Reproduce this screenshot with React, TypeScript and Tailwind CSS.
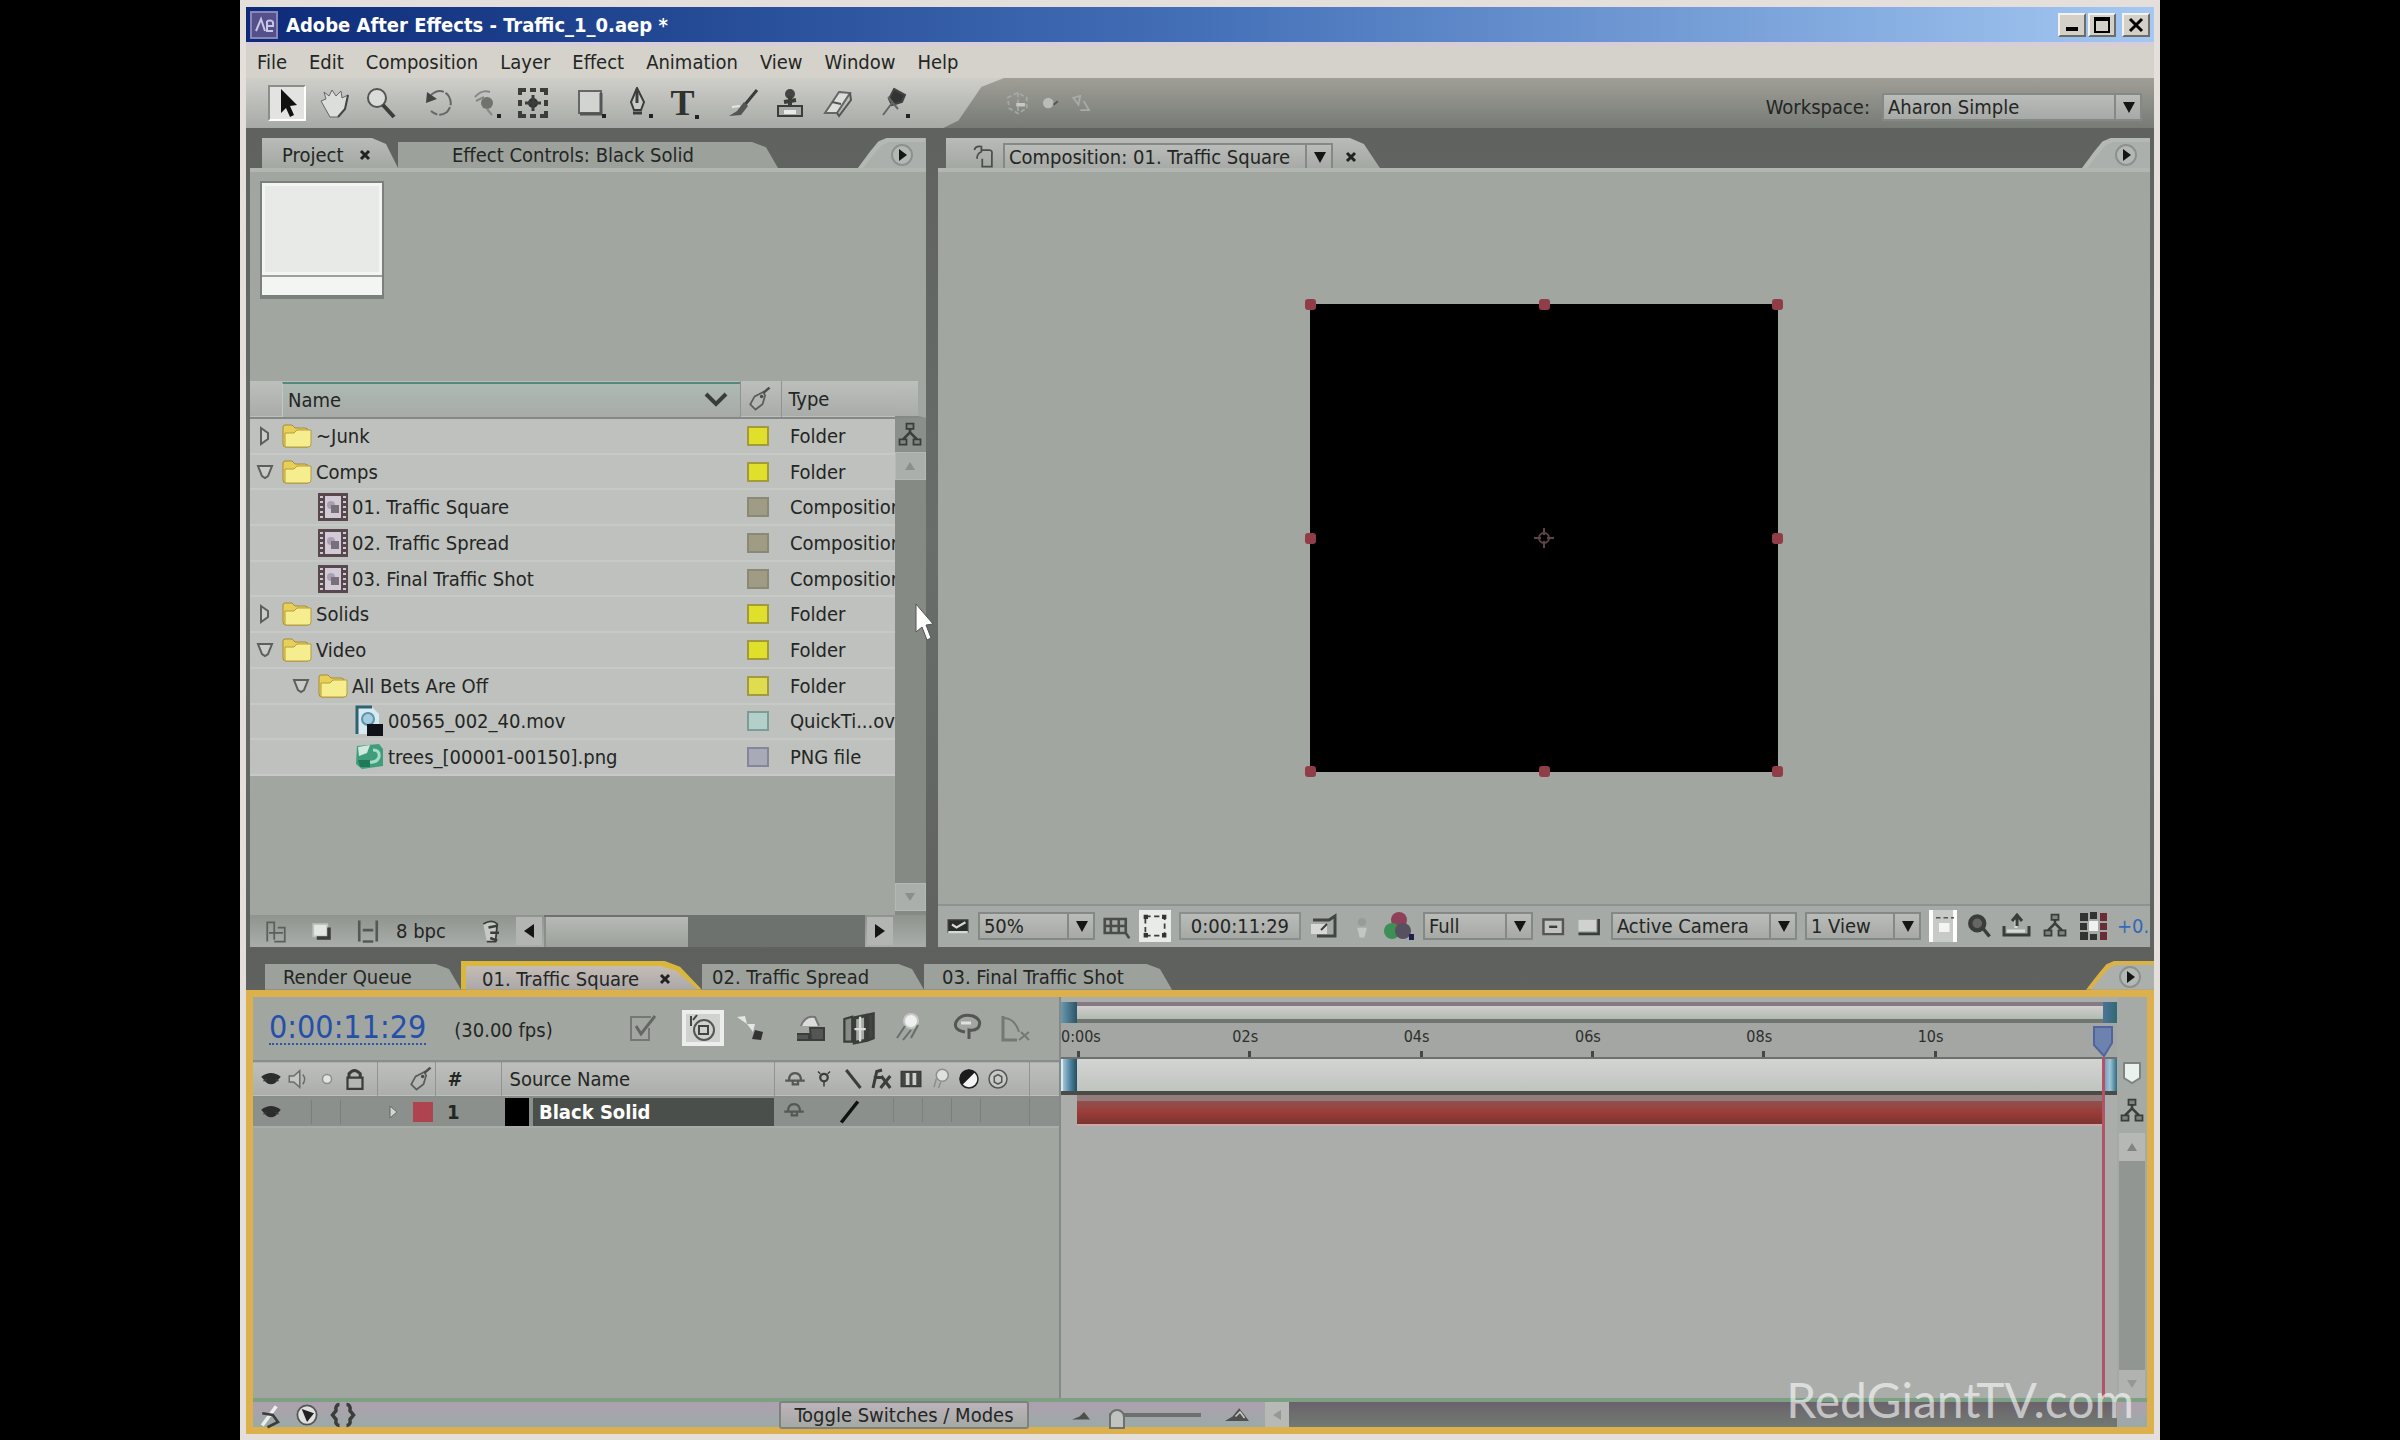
import React, {ReactNode} from 'react'
import clsx from 'clsx'

const menus = ['File', 'Edit', 'Composition', 'Layer', 'Effect', 'Animation', 'View', 'Window', 'Help']

type Item = {
    name: string
    kind: 'folder' | 'comp' | 'movie' | 'image'
    level: number
    open?: boolean
    type: string
    label: string
}

const items: Item[] = [
    {name: '~Junk', kind: 'folder', level: 0, open: false, type: 'Folder', label: 'bg-[#dfdf2c] border-[#a39a3c]'},
    {name: 'Comps', kind: 'folder', level: 0, open: true, type: 'Folder', label: 'bg-[#dfdf2c] border-[#a39a3c]'},
    {name: '01. Traffic Square', kind: 'comp', level: 1, type: 'Composition', label: 'bg-[#a09c84] border-[#8a8877]'},
    {name: '02. Traffic Spread', kind: 'comp', level: 1, type: 'Composition', label: 'bg-[#a09c84] border-[#8a8877]'},
    {name: '03. Final Traffic Shot', kind: 'comp', level: 1, type: 'Composition', label: 'bg-[#a09c84] border-[#8a8877]'},
    {name: 'Solids', kind: 'folder', level: 0, open: false, type: 'Folder', label: 'bg-[#dfdf2c] border-[#a39a3c]'},
    {name: 'Video', kind: 'folder', level: 0, open: true, type: 'Folder', label: 'bg-[#dfdf2c] border-[#a39a3c]'},
    {name: 'All Bets Are Off', kind: 'folder', level: 1, open: true, type: 'Folder', label: 'bg-[#e0dc50] border-[#a39a3c]'},
    {name: '00565_002_40.mov', kind: 'movie', level: 2, type: 'QuickTi...ov', label: 'bg-[#b2cfc9] border-[#7d9c98]'},
    {name: 'trees_[00001-00150].png', kind: 'image', level: 2, type: 'PNG file', label: 'bg-[#a9aab8] border-[#85869a]'},
]

const indents = ['pl-[5px]', 'pl-[41px]', 'pl-[77px]']

type SvgProps = { className?: string, children: ReactNode, box?: string }

const Svg = ({className = 'size-8', children, box = '0 0 32 32'}: SvgProps) => (
    <svg viewBox={box} className={clsx('shrink-0', className)} fill="none" stroke="#3a3d3a" strokeWidth="2">
        {children}
    </svg>
)

const Eye = () => (
    <Svg className="size-6">
        <path d="M3 13 Q16 3 29 13 L22 21 Q16 25 10 21 Z" fill="#2c2c2e" stroke="none"/>
        <path d="M6 19 L10 16 M26 19 L22 16" />
    </Svg>
)

const Tag = () => (
    <Svg className="size-7">
        <path d="M21 8 L11 13 L6 22 L12 28 L20 22 L23 12 Z" fill="#b4b8b3" stroke="#5a5d5a"/>
        <path d="M21 9 L28 3" stroke="#4a4d4a" strokeWidth="3"/>
        <circle cx="19" cy="13" r="2" fill="#4a4d4a" stroke="none"/>
    </Svg>
)

const Shy = () => (
    <Svg className="size-6">
        <path d="M3 18 H29 M8 18 Q8 8 16 8 Q24 8 24 18 M13 19 V23 H20 V19" stroke="#555855" strokeWidth="3"/>
    </Svg>
)

const Twirl = ({open}: { open?: boolean }) => (
    <Svg className="size-5" box="0 0 20 20">
        {open
            ? <path d="M3 4 H17 L13 14 L10 16 L7 14 Z" fill="#c9ccc8" stroke="#5c605c"/>
            : <path d="M6 2 L13 7 V13 L6 18 Z" fill="#c9ccc8" stroke="#5c605c"/>}
    </Svg>
)

const Close = () => (
    <Svg className="size-3" box="0 0 12 12">
        <path d="M2 2 L10 10 M10 2 L2 10" stroke="#222" strokeWidth="3"/>
    </Svg>
)

const Sprout = ({className = 'size-7'}: { className?: string }) => (
    <Svg className={className}>
        <path d="M16 4 V14 M16 13 L8 21 M16 13 L24 21" strokeWidth="3"/>
        <path d="M4 21 h8 v6 h-8 z M20 21 h8 v6 h-8 z M12 3 h8 v6 h-8z" fill="#80857f"/>
    </Svg>
)

const ItemIcon = ({kind}: { kind: Item['kind'] }) => {
    if (kind === 'folder')
        return (
            <Svg className="size-8">
                <path d="M2 7 Q2 5 4 5 H11 L14 8 H24 Q27 8 27 11 V27 H5 Q2 27 2 24 Z" fill="#e8cf58" stroke="#a58c35" strokeWidth="1"/>
                <path d="M4 13 H13 L16 10 H30 V24 Q30 27 27 27 H4 Z" fill="#f6ee8e" stroke="#b59c3a" strokeWidth="1"/>
            </Svg>
        )
    if (kind === 'comp')
        return (
            <Svg className="size-8">
                <rect x="1" y="2" width="30" height="28" fill="#57474f" stroke="none"/>
                <rect x="8" y="5" width="16" height="22" fill="#d2cbd6" stroke="none"/>
                <path d="M3 6h3M3 11h3M3 16h3M3 21h3M3 26h3M26 6h3M26 11h3M26 16h3M26 21h3M26 26h3" stroke="#cfc8cf"/>
                <circle cx="14" cy="14" r="4" fill="#a8a0b0" stroke="none"/>
                <path d="M14 14h8v8h-8z" fill="#75707c" stroke="none"/>
            </Svg>
        )
    if (kind === 'movie')
        return (
            <Svg className="size-8">
                <path d="M4 2 H19 L26 9 V29 H4 Z" fill="#d9e9f0" stroke="none"/>
                <path d="M4 29 V2 H19" stroke="#2e6272" strokeWidth="3"/>
                <circle cx="15" cy="14" r="6" fill="#a4ccdc" stroke="#5a94ac"/>
                <path d="M14 19 H30 V31 H14 Z" fill="#101418" stroke="none"/>
            </Svg>
        )
    return (
        <Svg className="size-8">
            <path d="M4 5 L26 3 L30 8 V25 L9 28 L3 23 Z" fill="#3f9d7d" stroke="none"/>
            <path d="M5 6 L17 4 L14 12 L6 15 Z" fill="#cfeadd" stroke="none"/>
            <path d="M20 9 Q27 9 26 16 Q24 22 16 21" stroke="#a8dcc6" strokeWidth="3"/>
            <path d="M5 19 H17 V26 H7 Z" fill="#1f7a5c" stroke="none"/>
        </Svg>
    )
}

type DropProps = { label: string, value: string, className?: string }

const Drop = ({label, value, className}: DropProps) => (
    <div className={clsx('relative h-7 shrink-0', className)}>
        <select aria-label={label}
                className="block size-full appearance-none border-2 border-[#858985] bg-linear-to-b from-[#b9bcb8] to-[#a6a9a5] pl-1 pr-8 leading-6">
            <option>{value}</option>
        </select>
        <div className="pointer-events-none absolute inset-y-0 right-0 flex w-7 items-center justify-center border-l-2 border-[#858985]">
            <Svg className="size-3" box="0 0 12 12"><path d="M0 1 H12 L6 12 Z" fill="#151515" stroke="none"/></Svg>
        </div>
    </div>
)

const Flyout = ({gold = false}: { gold?: boolean }) => (
    <div className={clsx('ml-auto flex h-full w-[68px] pl-[5px] pt-[4px] [clip-path:polygon(0_100%,18%_45%,30%_12%,42%_0,100%_0,100%_100%)]',
        gold ? 'bg-[#d9b24a]' : 'bg-[#b5b9b4]')}>
        <button aria-label="Panel menu" className="flex flex-1 items-center justify-end bg-[#acb0ac] pr-3 [clip-path:polygon(0_100%,18%_45%,30%_12%,42%_0,100%_0,100%_100%)]">
            <Svg className="size-6" box="0 0 24 24">
                <circle cx="12" cy="12" r="10" fill="#b4b8b4" stroke="#8d918d"/>
                <path d="M9 6 L17 12 L9 18 Z" fill="#151515" stroke="none"/>
            </Svg>
        </button>
    </div>
)

type TabProps = { children: ReactNode, className?: string, onTop?: boolean }

const Tab = ({children, className, onTop}: TabProps) => (
    <button role="tab" aria-selected={!!onTop}
            className={clsx('flex shrink-0 items-center whitespace-nowrap [clip-path:polygon(0_0,calc(100%-26px)_0,calc(100%-12px)_20%,100%_100%,0_100%)]',
                onTop ? 'h-full bg-linear-to-b from-[#b8bbb7] to-[#a4a8a3] pt-1' : 'h-[26px] self-end bg-[#9da19c]', className)}>
        {children}
    </button>
)

const TitleBar = () => (
    <header className="flex h-[35px] items-center gap-2 bg-linear-to-r from-[#0d2a78] via-[#4470b8] to-[#a4c8f2] px-1">
        <Svg className="size-7" box="0 0 28 28">
            <rect x="1" y="1" width="26" height="26" fill="#54508c" stroke="#8a86b8"/>
            <path d="M6 20 L11 8 L15 20 M17 15 H24 M17 10 Q24 8 23 14 M17 10 V20 H23" stroke="#c8c8e4"/>
        </Svg>
        <h1 className="font-bold text-white">Adobe After Effects - Traffic_1_0.aep *</h1>
        <div className="ml-auto flex items-center gap-[2px]">
            <button aria-label="Minimize" className="flex h-6 w-7 items-end justify-center border-2 border-[#f4f2ec] border-r-[#6c6c68] border-b-[#6c6c68] bg-[#d4d0c8] pb-1">
                <span className="h-1 w-3 bg-black"/>
            </button>
            <button aria-label="Maximize" className="flex h-6 w-7 items-center justify-center border-2 border-[#f4f2ec] border-r-[#6c6c68] border-b-[#6c6c68] bg-[#d4d0c8]">
                <span className="size-4 border-2 border-t-4 border-black"/>
            </button>
            <button aria-label="Close" className="ml-1 flex h-6 w-7 items-center justify-center border-2 border-[#f4f2ec] border-r-[#6c6c68] border-b-[#6c6c68] bg-[#d4d0c8]">
                <Svg className="size-4" box="0 0 16 16"><path d="M2 2 L14 14 M14 2 L2 14" stroke="#000" strokeWidth="3"/></Svg>
            </button>
        </div>
    </header>
)

const Corner = () => <path d="M27 27 h4 v4 h-4 z" fill="#222" stroke="none"/>

const tools: { name: string, icon: ReactNode }[][] = [
    [
        {name: 'Selection', icon: <Svg><path d="M10 2 V26 L15 21 L19 30 L23 28 L19 19 L26 18 Z" fill="#111" stroke="none"/></Svg>},
        {
            name: 'Hand', icon: <Svg>
                <path d="M3 14 L8 12 L6 5 L11 9 L14 3 L18 9 L23 4 L24 11 L30 8 L27 22 L20 30 H12 Z" fill="#dcdedb" stroke="#666" strokeWidth="1"/>
                <path d="M30 8 L27 22 L20 30" stroke="#444"/>
            </Svg>
        },
        {
            name: 'Zoom', icon: <Svg>
                <circle cx="12" cy="11" r="9" fill="#dadcd9" stroke="#555"/>
                <path d="M18 18 L29 30" strokeWidth="4"/>
            </Svg>
        },
    ],
    [
        {
            name: 'Rotation', icon: <Svg>
                <path d="M8 8 Q17 0 25 8 Q31 17 24 25 Q16 31 8 24" stroke="#666" strokeDasharray="14 2"/>
                <path d="M3 16 L4 5 L14 12 Z" fill="#444" stroke="none"/>
            </Svg>
        },
        {
            name: 'Orbit Camera', icon: <Svg>
                <circle cx="17" cy="16" r="6" fill="#70746f" stroke="none"/>
                <path d="M5 10 Q12 2 20 5 M6 14 L14 10 M17 22 L22 28" stroke="#888"/><Corner/>
            </Svg>
        },
        {
            name: 'Pan Behind', icon: <Svg>
                <path d="M3 8 V3 H9 M13 3 H19 M23 3 H29 V8 M3 13 V19 M29 13 V19 M3 24 V29 H9 M13 29 H19 M23 29 H29 V24" strokeWidth="4"/>
                <circle cx="16" cy="16" r="5" fill="#333" stroke="none"/>
                <path d="M16 8 V24 M8 16 H24" strokeWidth="3"/>
            </Svg>
        },
    ],
    [
        {
            name: 'Rectangle', icon: <Svg>
                <rect x="4" y="4" width="22" height="22" fill="#d2d4d1" stroke="#666"/>
                <path d="M26 6 V27 H5" stroke="#555" strokeWidth="3"/><Corner/>
            </Svg>
        },
        {
            name: 'Pen', icon: <Svg>
                <path d="M15 1 L9 15 L12 23 H19 L22 15 Z" fill="#c9cbc8"/>
                <path d="M15 4 V16 M11 26 H20" strokeWidth="3"/><Corner/>
            </Svg>
        },
        {
            name: 'Type', icon: <span className="flex items-end">
                <span className="font-['Liberation_Serif',serif] text-[36px] leading-8 font-bold text-[#2f322f]">T</span>
                <Svg className="size-1" box="0 0 4 4"><path d="M0 0 h4 v4 h-4 z" fill="#222" stroke="none"/></Svg>
            </span>
        },
    ],
    [
        {
            name: 'Brush', icon: <Svg>
                <path d="M30 3 L16 20" strokeWidth="3"/>
                <path d="M17 15 L21 19 L14 28 L2 29 L10 24 Z" fill="#555" stroke="none"/>
                <path d="M5 20 L13 19" stroke="#e4e6e3"/>
            </Svg>
        },
        {
            name: 'Clone Stamp', icon: <Svg>
                <circle cx="16" cy="7" r="5" fill="#444" stroke="none"/>
                <path d="M16 9 V18 M10 15 L22 13" strokeWidth="4"/>
                <path d="M4 19 H28 V29 H4 Z" fill="#aaa"/>
                <path d="M10 25 H22" stroke="#e8eae7" strokeWidth="4"/>
            </Svg>
        },
        {
            name: 'Eraser', icon: <Svg>
                <path d="M18 5 L29 6 L16 26 L4 26 Z" fill="#dcdedb" stroke="#666"/>
                <path d="M29 6 L30 13 L18 29 L16 26 M11 15 L20 17" stroke="#555"/>
            </Svg>
        },
    ],
    [
        {
            name: 'Puppet Pin', icon: <Svg>
                <path d="M15 2 L26 8 L23 15 L13 18 L10 12 Z" fill="#333" stroke="#444"/>
                <path d="M9 10 L19 22 M13 16 L4 28" stroke="#666"/><Corner/>
            </Svg>
        },
    ],
]

const Toolbar = () => (
    <div className="flex h-[50px] items-center bg-linear-to-b from-[#a09f97] to-[#777b76]">
        <div className="flex h-full w-[758px] shrink-0 items-center gap-[11px] bg-linear-to-b from-[#cfcfca] to-[#a7aaa6] pl-[17px] [clip-path:polygon(0_0,100%_0,97%_18%,94%_85%,92%_100%,0_100%)]">
            {tools.map((group, i) => (
                <div key={i} className="flex">
                    {group.map(tool => (
                        <div key={tool.name} className="flex w-[47px] justify-center">
                            <button aria-label={tool.name}
                                    className={clsx('flex h-9 w-[38px] items-center justify-center',
                                        tool.name === 'Selection' && 'border-2 border-[#8b8e8a] border-r-white border-b-white bg-[#e3e4e1]')}>
                                {tool.icon}
                            </button>
                        </div>
                    ))}
                </div>
            ))}
        </div>
        <div className="flex items-center gap-1">
            <Svg className="size-7" box="0 0 32 32">
                <path d="M4 10 L16 4 L26 10 V22 L16 28 L6 22 Z M16 4 V28" stroke="#a5a8a3" strokeDasharray="5 3"/>
                <path d="M14 18 H24" stroke="#c5c8c3" strokeWidth="4"/>
            </Svg>
            <Svg className="size-7"><circle cx="14" cy="16" r="6" fill="#b9bcb7" stroke="none"/><path d="M20 18 L25 14" stroke="#555"/></Svg>
            <Svg className="size-7"><path d="M6 10 L14 8 L12 18 Z M18 14 L24 24 L14 24" stroke="#a9aca7"/></Svg>
        </div>
        <div className="ml-auto flex items-center gap-3 pt-2 pr-3">
            <span>Workspace:</span>
            <Drop label="Workspace" value="Aharon Simple" className="w-[260px]"/>
        </div>
    </div>
)

const ProjectPanel = () => (
    <section className="flex min-h-0 min-w-0 flex-col">
        <div role="tablist" className="flex h-[30px] shrink-0 pl-3">
            <Tab onTop className="w-[136px] gap-4 pl-5">Project <Close/></Tab>
            <Tab className="w-[380px] pl-[54px]">Effect Controls: Black Solid</Tab>
            <Flyout/>
        </div>
        <div className="flex min-h-0 flex-1 flex-col border-t-4 border-[#b2b6b1] bg-[#a1a6a1]">
            <div className="flex h-[209px] shrink-0 items-start pt-[9px] pl-[10px]">
                <div className="flex w-[124px] flex-col border-2 border-b-4 border-[#7c807c] bg-[#f3f5f3]">
                    <div className="m-[3px] h-[86px] bg-[#e8eae8]"/>
                    <div className="h-5 border-t-2 border-[#9da19c]"/>
                </div>
            </div>
            <div className="flex min-h-0 flex-1">
                <div className="min-w-0 flex-1">
                    <table className="h-[395px] w-full table-fixed border-collapse">
                        <colgroup>
                            <col/>
                            <col className="w-[41px]"/>
                            <col className="w-[113px]"/>
                        </colgroup>
                        <thead className="text-left">
                        <tr className="h-[37px] border-b-2 border-[#858985] bg-linear-to-b from-[#bcbfbb] to-[#a9aca8]">
                            <th className="p-0 font-normal">
                                <div className="ml-8 flex h-[35px] items-center justify-between border-t-2 border-l border-t-[#55877a] border-l-[#c5c8c4] bg-linear-to-b from-[#adbab4] to-[#a8aaa7] pr-3 pl-[5px]">
                                    Name
                                    <Svg className="h-4 w-6" box="0 0 24 16"><path d="M2 2 L12 12 L22 2" strokeWidth="4"/></Svg>
                                </div>
                            </th>
                            <th className="border-x border-[#90938f] p-0 pl-1 font-normal" aria-label="Label"><Tag/></th>
                            <th className="p-0 pl-[6px] font-normal">Type</th>
                        </tr>
                        </thead>
                        <tbody>
                        {items.map(item => (
                            <tr key={item.name} className="border-b-2 border-[#c6c9c5] bg-[#bec1bd]">
                                <td className="p-0">
                                    <div className={clsx('flex items-center whitespace-nowrap', indents[item.level])}>
                                        <span className="flex w-[26px]">{item.kind === 'folder' && <Twirl open={item.open}/>}</span>
                                        <ItemIcon kind={item.kind}/>
                                        <span className="pl-[3px]">{item.name}</span>
                                    </div>
                                </td>
                                <td className="p-0 pl-[6px]"><div className={clsx('h-5 w-[22px] border-2', item.label)}/></td>
                                <td className="overflow-hidden p-0 pl-2 whitespace-nowrap">{item.type}</td>
                            </tr>
                        ))}
                        </tbody>
                    </table>
                </div>
                <div className="flex w-[31px] shrink-0 flex-col bg-[#858a85]">
                    <div className="h-[37px] border-r-8 border-b-2 border-b-[#858985] border-r-[#a1a6a1] bg-linear-to-b from-[#bcbfbb] to-[#a9aca8]"/>
                    <button aria-label="Project flowchart" className="flex h-[34px] items-center justify-center bg-[#8b8f8b]"><Sprout/></button>
                    <button aria-label="Scroll up" className="flex h-7 items-center justify-center border border-[#b5b8b4] bg-[#abafab]">
                        <Svg className="size-3" box="0 0 12 12"><path d="M6 2 L11 10 H1 Z" fill="#8b8f8b" stroke="none"/></Svg>
                    </button>
                    <button aria-label="Scroll down" className="mt-auto mb-1 flex h-7 items-center justify-center border border-[#b5b8b4] bg-[#abafab]">
                        <Svg className="size-3" box="0 0 12 12"><path d="M6 10 L11 2 H1 Z" fill="#8b8f8b" stroke="none"/></Svg>
                    </button>
                </div>
            </div>
            <div className="flex h-8 shrink-0 items-center bg-linear-to-b from-[#90948f] to-[#aaaeaa] pl-3">
                <button aria-label="Find" className="flex w-[46px]">
                    <Svg className="size-7"><path d="M6 28 V6 H14 V26 M18 12 H26 V28 H14 M8 18 H24" stroke="#5c5f5c"/></Svg>
                </button>
                <button aria-label="New folder" className="flex w-[46px]">
                    <Svg className="size-7"><path d="M6 8 H22 V22 H6 Z" fill="#e4e6e3" stroke="#c0c3bf"/><path d="M24 12 V24 H10" strokeWidth="4"/></Svg>
                </button>
                <button aria-label="New composition" className="flex w-[42px]">
                    <Svg className="size-7"><path d="M6 4 V28 M26 4 V28 M10 15 H22 M10 28 H22" stroke="#555855" strokeWidth="3"/></Svg>
                </button>
                <button>8 bpc</button>
                <button aria-label="Delete" className="ml-8 flex w-[38px]">
                    <Svg className="size-7"><path d="M6 8 Q16 2 22 8 L20 28 H10" fill="#c6c9c5"/><path d="M12 12 L22 10 M14 18 H24 M14 24 L22 27" strokeWidth="3"/></Svg>
                </button>
                <button aria-label="Scroll left" className="flex h-7 w-[26px] items-center justify-center bg-[#b2b5b1]">
                    <Svg className="size-4" box="0 0 16 16"><path d="M13 1 V15 L3 8 Z" fill="#151515" stroke="none"/></Svg>
                </button>
                <div className="mx-[2px] flex h-full flex-1 bg-[#6e726e] pt-[2px]">
                    <div className="w-[45%] border-l-2 border-[#8b8f8b] bg-linear-to-b from-[#b6b9b5] to-[#9da19c]"/>
                </div>
                <button aria-label="Scroll right" className="mr-[33px] flex h-7 w-[26px] items-center justify-center bg-[#b2b5b1]">
                    <Svg className="size-4" box="0 0 16 16"><path d="M3 1 V15 L13 8 Z" fill="#151515" stroke="none"/></Svg>
                </button>
            </div>
        </div>
    </section>
)

const handles = [
    '-top-[5px] -left-[5px]', '-top-[5px] left-1/2 -ml-[5px]', '-top-[5px] -right-[5px]',
    'top-1/2 -mt-[5px] -left-[5px]', 'top-1/2 -mt-[5px] -right-[5px]',
    '-bottom-[5px] -left-[5px]', '-bottom-[5px] left-1/2 -ml-[5px]', '-bottom-[5px] -right-[5px]',
]

const CompFooter = () => (
    <div className="flex h-[43px] shrink-0 items-center gap-2 overflow-hidden border-t-2 border-[#8f938f] bg-[#a6aaa6] pl-2 whitespace-nowrap">
        <Svg className="size-6"><path d="M3 8 H29 V24 H3 Z" fill="#2a2c2a"/><path d="M3 24 H29 M8 14 L14 18 L26 11" stroke="#d5d8d4" strokeWidth="3"/></Svg>
        <Drop label="Magnification" value="50%" className="w-[117px]"/>
        <Svg className="size-7"><path d="M2 8 H26 V24 H2 Z M9 8 V24 M18 8 V24 M2 16 H26 M26 24 L30 30" stroke="#4a4d4a" strokeWidth="3"/></Svg>
        <button aria-label="Toggle mask visibility" className="flex size-8 shrink-0 items-center justify-center bg-[#e9ebe9]">
            <Svg className="size-7"><rect x="5" y="5" width="22" height="22" strokeDasharray="6 4"/><path d="M3 3h5v5h-5z M24 3h5v5h-5z M3 24h5v5h-5z M24 24h5v5h-5z" fill="#333" stroke="none"/></Svg>
        </button>
        <button className="h-7 w-[122px] shrink-0 border-2 border-[#8b8f8b] bg-linear-to-b from-[#b9bcb8] to-[#a6a9a5] leading-6">0:00:11:29</button>
        <Svg><path d="M4 10 L20 10 L26 6 V26 H8" stroke="#444" strokeWidth="3"/><path d="M2 14 H18 V24 H2 Z" fill="#d6d9d5" stroke="none"/><path d="M12 20 L18 14"/></Svg>
        <Svg className="size-[26px]"><circle cx="16" cy="11" r="5" fill="#989c98" stroke="none"/><path d="M10 18 H22 L19 30 H13 Z" fill="#c3c6c2" stroke="none"/></Svg>
        <Svg>
            <circle cx="16" cy="10" r="8" fill="#8e4058" stroke="none"/>
            <circle cx="9" cy="21" r="8" fill="#3d8f55" stroke="none"/>
            <circle cx="20" cy="21" r="8" fill="#57505e" stroke="none"/>
            <path d="M26 24h5v6h-5z" fill="#1d2048" stroke="none"/>
        </Svg>
        <Drop label="Resolution" value="Full" className="w-[110px]"/>
        <Svg className="size-[26px]"><path d="M3 8 H27 V26 H3 Z" fill="#c0c3bf" stroke="#555" strokeWidth="3"/><path d="M10 17 H20" strokeWidth="3"/></Svg>
        <Svg className="size-7"><path d="M4 9 H24 V22 H4 Z" fill="#cfd2ce" stroke="none"/><path d="M27 8 V25 H4" strokeWidth="3"/></Svg>
        <Drop label="3D view" value="Active Camera" className="w-[186px]"/>
        <Drop label="View layout" value="1 View" className="w-[116px]"/>
        <button aria-label="Pixel aspect" className="flex h-8 w-7 shrink-0 items-center border-x-4 border-white bg-[#c7cac6]">
            <Svg className="size-6"><path d="M4 5 H28" strokeDasharray="6 4" stroke="#555"/><rect x="8" y="12" width="14" height="12" fill="#f3f4f3" stroke="none"/></Svg>
        </button>
        <Svg className="size-7"><circle cx="14" cy="13" r="8" fill="#666" strokeWidth="5"/><path d="M20 18 L28 28" strokeWidth="4"/></Svg>
        <Svg><path d="M3 16 V25 H28 V16" strokeWidth="3"/><path d="M6 21 H24 M15 10 V18" stroke="#d8dbd7" strokeWidth="3"/><path d="M16 4 V16 M11 11 L16 5 L21 11" strokeWidth="3"/></Svg>
        <Sprout/>
        <Svg>
            <path d="M3 3h8v8h-8z M3 13h7v7h-7z M3 22h8v8h-8z M13 24h7v6h-7z M13 2h7v7h-7z" fill="#333" stroke="none"/>
            <path d="M23 3h7v8h-7z M23 13h7v7h-7z M23 22h7v8h-7z" fill="#6b2d35" stroke="none"/>
            <path d="M12 11h9v10h-9z" fill="#f0f1f0" stroke="none"/>
        </Svg>
        <button className="text-[#3468b8]">+0.</button>
    </div>
)

const CompPanel = () => (
    <section className="flex min-h-0 min-w-0 flex-col">
        <div className="flex h-[30px] shrink-0 pl-2">
            <div className="flex h-full w-[434px] shrink-0 items-center bg-linear-to-b from-[#b8bbb7] to-[#a4a8a3] pt-2 pl-6 [clip-path:polygon(0_0,calc(100%-30px)_0,calc(100%-16px)_20%,100%_100%,0_100%)]">
                <Svg className="mr-[5px] size-7"><path d="M5 8 Q6 3 13 4 V10 Q8 12 8 18 M14 8 H22 Q26 8 25 13 V27 H14 V18" stroke="#4b4e4b"/></Svg>
                <Drop label="Composition" value="Composition: 01. Traffic Square" className="mr-3 w-[330px]"/>
                <button aria-label="Close tab"><Close/></button>
            </div>
            <Flyout/>
        </div>
        <div className="flex min-h-0 flex-1 items-center justify-center border-t-4 border-[#b2b6b1] bg-[#a1a6a1]">
            <div className="relative size-[468px] bg-black">
                {handles.map(pos => <div key={pos} className={clsx('absolute size-[11px] rounded-[3px] bg-[#8f3d47]', pos)}/>)}
                <Svg className="absolute top-1/2 left-1/2 -mt-3 -ml-3 size-6" box="0 0 24 24">
                    <circle cx="12" cy="12" r="5" stroke="#5b4549"/>
                    <path d="M12 2 V9 M12 15 V22 M2 12 H9 M15 12 H22" stroke="#5b4549"/>
                </Svg>
            </div>
        </div>
        <CompFooter/>
    </section>
)

const LayerOutline = () => (
    <div className="flex w-[808px] shrink-0 flex-col border-r-2 border-[#858a86] bg-[#a1a6a1]">
        <div className="flex h-[63px] shrink-0 items-center pr-5 pl-4">
            <button className="border-b-2 border-dotted border-[#2f55a8] text-[32px] leading-8 text-[#2450ac]">0:00:11:29</button>
            <span className="pt-1 pl-7">(30.00 fps)</span>
            <div className="ml-auto flex gap-3">
                <button aria-label="Live update" className="flex h-9 w-12 items-center justify-center">
                    <Svg><path d="M24 5 H4 V28 H22 V16" stroke="#777"/><path d="M9 14 L14 22 L28 4" stroke="#666" strokeWidth="3"/></Svg>
                </button>
                <div className="flex">
                    <div className="flex w-12 justify-center">
                        <button aria-label="Draft 3D" className="flex h-9 w-[42px] items-center justify-center border-4 border-[#ecedec] bg-[#cfd2ce]">
                            <Svg><circle cx="17" cy="18" r="10" stroke="#555"/><path d="M12 14 h9 v8 h-9z M4 4 V14 M10 3 L6 8" stroke="#444"/></Svg>
                        </button>
                    </div>
                    <button aria-label="Shy layers" className="flex h-9 w-12 items-center justify-center">
                        <Svg><path d="M2 5 L10 4 L12 12 Z M12 12 L20 12 L18 20 Z" fill="#e4e6e4" stroke="none"/><path d="M20 18 L28 20 L26 28 L17 27 Z" fill="#333" stroke="none"/></Svg>
                    </button>
                </div>
                <div className="flex">
                    <button aria-label="Hide shy layers" className="flex h-9 w-12 items-center justify-center">
                        <Svg><path d="M6 14 Q10 3 20 5 L24 14" fill="#dadcd9" stroke="#777"/><path d="M2 22 H14 V28 H2 M15 16 H29 V28 H16 Z" fill="#555"/></Svg>
                    </button>
                    <button aria-label="Frame blending" className="flex h-9 w-12 items-center justify-center">
                        <Svg className="size-9"><path d="M3 8 L10 6 V28 L3 28 Z" fill="#888c87"/><path d="M12 7 L22 5 V27 L12 29 Z" fill="#a6aaa5" strokeWidth="3"/><path d="M17 6 V28 M12 17 H22" stroke="#dcdedb"/><path d="M24 4 L29 3 V25 L24 27 Z" fill="#444"/></Svg>
                    </button>
                    <button aria-label="Motion blur" className="flex h-9 w-12 items-center justify-center">
                        <Svg><circle cx="20" cy="9" r="7" fill="#eff0ef" stroke="#c5c8c4"/><path d="M14 14 L6 26 M20 18 L12 28 M27 13 L20 26" stroke="#6a6d6a"/></Svg>
                    </button>
                </div>
                <div className="flex">
                    <button aria-label="Brainstorm" className="flex h-9 w-12 items-center justify-center">
                        <Svg><path d="M14 20 Q2 18 5 10 Q10 1 22 4 Q32 8 27 16 Q23 19 18 18 V27" stroke="#555" strokeWidth="3"/><path d="M10 11 H20" stroke="#dfe1de" strokeWidth="3"/></Svg>
                    </button>
                    <button aria-label="Graph editor" className="flex h-9 w-12 items-center justify-center">
                        <Svg><path d="M4 4 V28 H18" stroke="#777" strokeWidth="3"/><path d="M4 6 Q16 6 20 20 M20 28 L30 20 M22 20 L30 28" stroke="#777"/></Svg>
                    </button>
                </div>
            </div>
        </div>
        <table className="w-full table-fixed border-collapse">
            <colgroup>
                <col className="w-[124px]"/>
                <col className="w-[58px]"/>
                <col className="w-[66px]"/>
                <col/>
                <col className="w-[255px]"/>
                <col className="w-[30px]"/>
            </colgroup>
            <thead className="text-left">
            <tr className="h-9 border-t-2 border-b-2 border-[#8a8e8a] bg-linear-to-b from-[#bcbfbb] to-[#abaeaa]">
                <th className="p-0" aria-label="A/V features">
                    <div className="flex gap-1 pl-[6px]">
                        <Eye/>
                        <Svg className="size-6"><path d="M3 12 H9 L17 5 V27 L9 20 H3 Z M21 10 Q26 16 21 23" fill="#c4c7c3" stroke="#6a6d6a"/></Svg>
                        <Svg className="size-6"><circle cx="16" cy="16" r="6" fill="#e2e4e1" stroke="#8a8d89"/></Svg>
                        <Svg className="size-6"><path d="M8 15 V9 Q15 0 23 9 V15" strokeWidth="4"/><path d="M6 14 H26 V29 H6 Z" fill="#b3b6b2" strokeWidth="3"/></Svg>
                    </div>
                </th>
                <th className="border-l border-[#90938f] p-0 pl-7" aria-label="Label"><Tag/></th>
                <th className="border-l border-[#90938f] p-0 pl-3 italic">#</th>
                <th className="border-l border-[#90938f] p-0 pl-2 font-normal">Source Name</th>
                <th className="border-l border-[#90938f] p-0" aria-label="Switches">
                    <div className="flex gap-[5px] pl-2">
                        <Shy/>
                        <Svg className="size-6"><circle cx="16" cy="14" r="5" strokeWidth="3"/><path d="M16 20 V26 M8 6 L11 9 M24 6 L21 9"/></Svg>
                        <Svg className="size-6"><path d="M7 4 L26 28" strokeWidth="4"/></Svg>
                        <Svg className="size-6"><path d="M4 28 L9 6 L16 4 M5 14 H16 M15 12 L27 28 M27 12 L14 28" strokeWidth="4"/></Svg>
                        <Svg className="size-6"><path d="M3 6 H29 V26 H3 Z" fill="#444"/><path d="M9 8 H14 V24 H9 Z M18 8 H23 V24 H18 Z" fill="#cdd0cc" stroke="none"/></Svg>
                        <Svg className="size-6"><circle cx="19" cy="11" r="8" fill="#dfe1de" stroke="#8c8f8b"/><path d="M11 16 L8 27 M17 20 L14 28" stroke="#8c8f8b"/></Svg>
                        <Svg className="size-6"><circle cx="16" cy="16" r="12" fill="#f2f3f2" stroke="#222"/><path d="M24 7 A12 12 0 1 0 7 24 Z" fill="#1b1b1b" stroke="none"/></Svg>
                        <Svg className="size-6"><circle cx="16" cy="16" r="12" fill="#c6c9c5" stroke="#555"/><path d="M11 13 L16 10 L21 13 V20 L16 23 L11 20 Z" stroke="#555"/></Svg>
                    </div>
                </th>
                <th className="border-l border-[#90938f] p-0" aria-label="Spacer"/>
            </tr>
            </thead>
            <tbody>
            <tr className="h-[30px] border-b-2 border-[#a9ada9] bg-[#8c908c]">
                <td className="p-0">
                    <div className="flex pl-[6px]">
                        <Eye/>
                        <div className="ml-7 h-6 w-[30px] border-x border-[#7c807c]"/>
                    </div>
                </td>
                <td className="p-0">
                    <div className="flex items-center gap-3 pl-2">
                        <Svg className="size-4" box="0 0 16 16"><path d="M5 2 L12 8 L5 14 Z" fill="#d2d6d2" stroke="#636763" strokeWidth="1"/></Svg>
                        <div className="size-5 bg-[#b0444e]"/>
                    </div>
                </td>
                <td className="p-0 pl-3 font-bold">1</td>
                <td className="p-0">
                    <div className="flex gap-1 pl-1">
                        <div className="h-7 w-6 bg-black"/>
                        <div className="h-7 flex-1 bg-[#4b4f4b] pl-[6px] leading-7 font-bold text-white">Black Solid</div>
                    </div>
                </td>
                <td className="p-0">
                    <div className="flex pl-2">
                        <Shy/>
                        <Svg className="ml-[30px] size-7"><path d="M6 28 L25 4" stroke="#111" strokeWidth="4"/></Svg>
                        <div className="ml-[29px] h-6 w-[30px] border-x border-[#7c807c]"/>
                        <div className="ml-[28px] h-6 w-[30px] border-x border-[#7c807c]"/>
                    </div>
                </td>
                <td className="border-l border-[#7c807c] p-0"/>
            </tr>
            </tbody>
        </table>
    </div>
)

const ticks = ['0:00s', '02s', '04s', '06s', '08s', '10s']

const TimeGraph = () => (
    <div className="relative flex min-w-0 flex-1 flex-col bg-[#aaadaa]">
        <div className="flex h-[26px] shrink-0 pt-[5px]">
            <div className="w-4 bg-linear-to-r from-[#6a9ab0] to-[#2c5468]"/>
            <div className="flex-1 border-y-4 border-t-[#857a84] border-b-[#70756f] bg-linear-to-b from-[#d3cdd0] to-[#b0bbb0]"/>
            <div className="w-[14px] bg-linear-to-r from-[#4d7298] to-[#2f6a72]"/>
        </div>
        <div className="flex h-9 shrink-0 overflow-hidden border-b-2 border-[#6d716d] bg-[#a3a6a2] pr-[14px] pl-4 text-[16px] leading-7 text-[#2c2e2c]">
            {ticks.map(tick => (
                <div key={tick} className="flex w-[16.7%] shrink-0 flex-col">
                    <span className="-ml-4">{tick}</span>
                    <span className="mt-auto h-2 w-[3px] bg-[#444744]"/>
                </div>
            ))}
        </div>
        <div className="flex h-9 shrink-0 border-b-4 border-[#484b48] bg-linear-to-b from-[#d2d4d1] to-[#c0c4bf]">
            <div className="w-4 border-l-2 border-[#d5ecf4] bg-linear-to-r from-[#a4c4d6] via-[#4f86a4] to-[#244e60]"/>
            <div className="ml-auto w-[14px] bg-linear-to-r from-[#7a8ab8] via-[#9cc8d8] to-[#2f6a80]"/>
        </div>
        <div className="mr-[14px] ml-4 h-[31px] shrink-0 border-t-[6px] border-b-2 border-t-[#957b7a] border-b-[#d0a9a6] bg-linear-to-b from-[#8f5150] via-[#9a3c38] to-[#7c3430]"/>
        {/* current time indicator */}
        <div className="absolute top-7 right-1 bottom-0 flex w-5 flex-col items-center">
            <Svg className="h-8 w-5" box="0 0 20 32"><path d="M1 2 H19 V18 L11 31 L1 20 Z" fill="#6e82b0" stroke="#4f659c"/></Svg>
            <div className="w-[3px] flex-1 bg-[#b05468]"/>
        </div>
    </div>
)

const Timeline = () => (
    <section className="flex h-[34%] shrink-0 flex-col bg-linear-to-b from-[#5d605d] to-[#747874] pt-3">
        <div role="tablist" className="flex h-[29px] shrink-0 pl-[19px]">
            <Tab className="w-[196px] pl-[18px]">Render Queue</Tab>
            <div className="h-full shrink-0 bg-[#d9b63c] pt-[5px] pr-1 pl-[5px] [clip-path:polygon(0_0,calc(100%-38px)_0,calc(100%-22px)_20%,100%_100%,0_100%)]">
                <button role="tab" aria-selected="true" className="flex h-full w-[232px] items-center gap-5 bg-linear-to-b from-[#c6bcb4] to-[#a9a8a9] pt-[2px] pl-4 whitespace-nowrap [clip-path:polygon(0_0,calc(100%-38px)_0,calc(100%-22px)_20%,100%_100%,0_100%)]">
                    01. Traffic Square <Close/>
                </button>
            </div>
            <Tab className="w-[222px] pl-[10px]">02. Traffic Spread</Tab>
            <Tab className="w-[248px] pl-[18px]">03. Final Traffic Shot</Tab>
            <Flyout gold/>
        </div>
        <div className="flex min-h-0 flex-1 flex-col border-[7px] border-[#dcb04c]">
            <div className="flex min-h-0 flex-1">
                <LayerOutline/>
                <TimeGraph/>
                <div className="flex w-[30px] shrink-0 flex-col items-center bg-[#a6aaa6] pt-16">
                    <Svg className="h-6 w-5" box="0 0 20 24"><path d="M2 2 H18 V17 L10 22 L2 17 Z" fill="#e9f2ec" stroke="#7d8580"/></Svg>
                    <Sprout className="mt-2 h-9 w-7"/>
                    <button aria-label="Scroll up" className="mt-1 flex h-7 w-[26px] items-center justify-center bg-[#b5b8b5]">
                        <Svg className="size-3" box="0 0 12 12"><path d="M6 2 L11 10 H1 Z" fill="#80857f" stroke="none"/></Svg>
                    </button>
                    <div className="w-[26px] flex-1 bg-[#929692]"/>
                    <button aria-label="Scroll down" className="flex h-7 w-[26px] items-center justify-center bg-[#b0b3b0]">
                        <Svg className="size-3" box="0 0 12 12"><path d="M6 10 L11 2 H1 Z" fill="#959995" stroke="none"/></Svg>
                    </button>
                </div>
            </div>
            <div className="flex h-[29px] shrink-0 items-center border-t-4 border-[#7ba083] bg-linear-to-b from-[#aea0ae] to-[#9aaaa8]">
                <div className="flex w-[526px] gap-2 pl-1">
                    <Svg className="size-7"><path d="M6 28 L22 6" stroke="#eceeec" strokeWidth="4"/><path d="M6 14 L18 16 L24 24 L12 30" strokeWidth="3"/></Svg>
                    <Svg className="size-7"><circle cx="16" cy="16" r="11" fill="#dfe1df" stroke="#555"/><path d="M10 9 L24 14 L16 24 Z" fill="#222" stroke="none"/></Svg>
                    <Svg className="size-7"><path d="M12 4 Q7 4 8 11 L4 16 L8 21 Q7 28 12 28 M20 4 Q25 4 24 11 L28 16 L24 21 Q25 28 20 28" strokeWidth="4"/></Svg>
                </div>
                <button className="h-7 w-[250px] shrink-0 rounded-[3px] border-2 border-[#7e827e] bg-linear-to-b from-[#bcb3ba] to-[#a5a9a5] leading-6">Toggle Switches / Modes</button>
                <Svg className="mr-4 ml-10 size-6"><path d="M4 22 L14 18 L20 12 L28 22 Z" fill="#4d504d" stroke="none"/></Svg>
                <input type="range" aria-label="Timeline zoom" defaultValue="0"
                       className="h-6 w-[92px] shrink-0 appearance-none bg-transparent [&::-webkit-slider-runnable-track]:h-1 [&::-webkit-slider-runnable-track]:bg-[#6d716d] [&::-webkit-slider-thumb]:-mt-1 [&::-webkit-slider-thumb]:h-5 [&::-webkit-slider-thumb]:w-4 [&::-webkit-slider-thumb]:appearance-none [&::-webkit-slider-thumb]:rounded-t-lg [&::-webkit-slider-thumb]:border-2 [&::-webkit-slider-thumb]:border-[#6d716d] [&::-webkit-slider-thumb]:bg-[#c0c3bf]"/>
                <Svg className="mr-3 ml-5 h-6 w-8"><path d="M0 24 L10 18 L19 7 L32 24 Z" fill="#4d504d" stroke="none"/><path d="M14 18 L20 12 L26 20" stroke="#cbcecb"/></Svg>
                <button aria-label="Scroll left" className="flex h-full w-6 items-center justify-center bg-[#b6b9b6]">
                    <Svg className="size-3" box="0 0 12 12"><path d="M10 1 V11 L2 6 Z" fill="#959995" stroke="none"/></Svg>
                </button>
                <div className="mr-[30px] h-full flex-1 bg-linear-to-b from-[#6b626b] to-[#717a73]"/>
            </div>
        </div>
    </section>
)

const App = () => {
    return (
        <div className="h-screen overflow-hidden bg-black font-['DejaVu_Sans_Condensed','DejaVu_Sans',sans-serif] text-[20px] leading-7 text-[#242624]">
            <div className="relative mx-[10%] flex h-full flex-col border-x-[6px] border-t-[7px] border-b-[6px] border-[#e4dfdb] bg-[#d4d2ca]">
                <TitleBar/>
                <nav className="flex h-9 shrink-0 items-center border-t-4 border-[#d6cdd8]">
                    {menus.map(menu => <button key={menu} className="px-[11px]">{menu}</button>)}
                </nav>
                <Toolbar/>
                <main className="grid min-h-0 flex-1 grid-cols-[358fr_642fr] gap-3 bg-linear-to-b from-[#5f625f] via-[#6a6e6a] to-[#5f625f] px-1 pt-[10px] pb-[2px]">
                    <ProjectPanel/>
                    <CompPanel/>
                </main>
                <Timeline/>
                <svg viewBox="0 0 20 38" className="absolute top-[596px] left-[35%] h-[38px] w-5">
                    <path d="M2 1 V29 L8 24 L13 37 L17 35 L12 22 L19 21 Z" fill="#fff" stroke="#555" strokeWidth="1"/>
                </svg>
                <div className="absolute right-5 bottom-2 font-['Lato',sans-serif] text-[48px] leading-[52px] text-white/60">RedGiantTV.com</div>
            </div>
        </div>
    )
}

export default App
